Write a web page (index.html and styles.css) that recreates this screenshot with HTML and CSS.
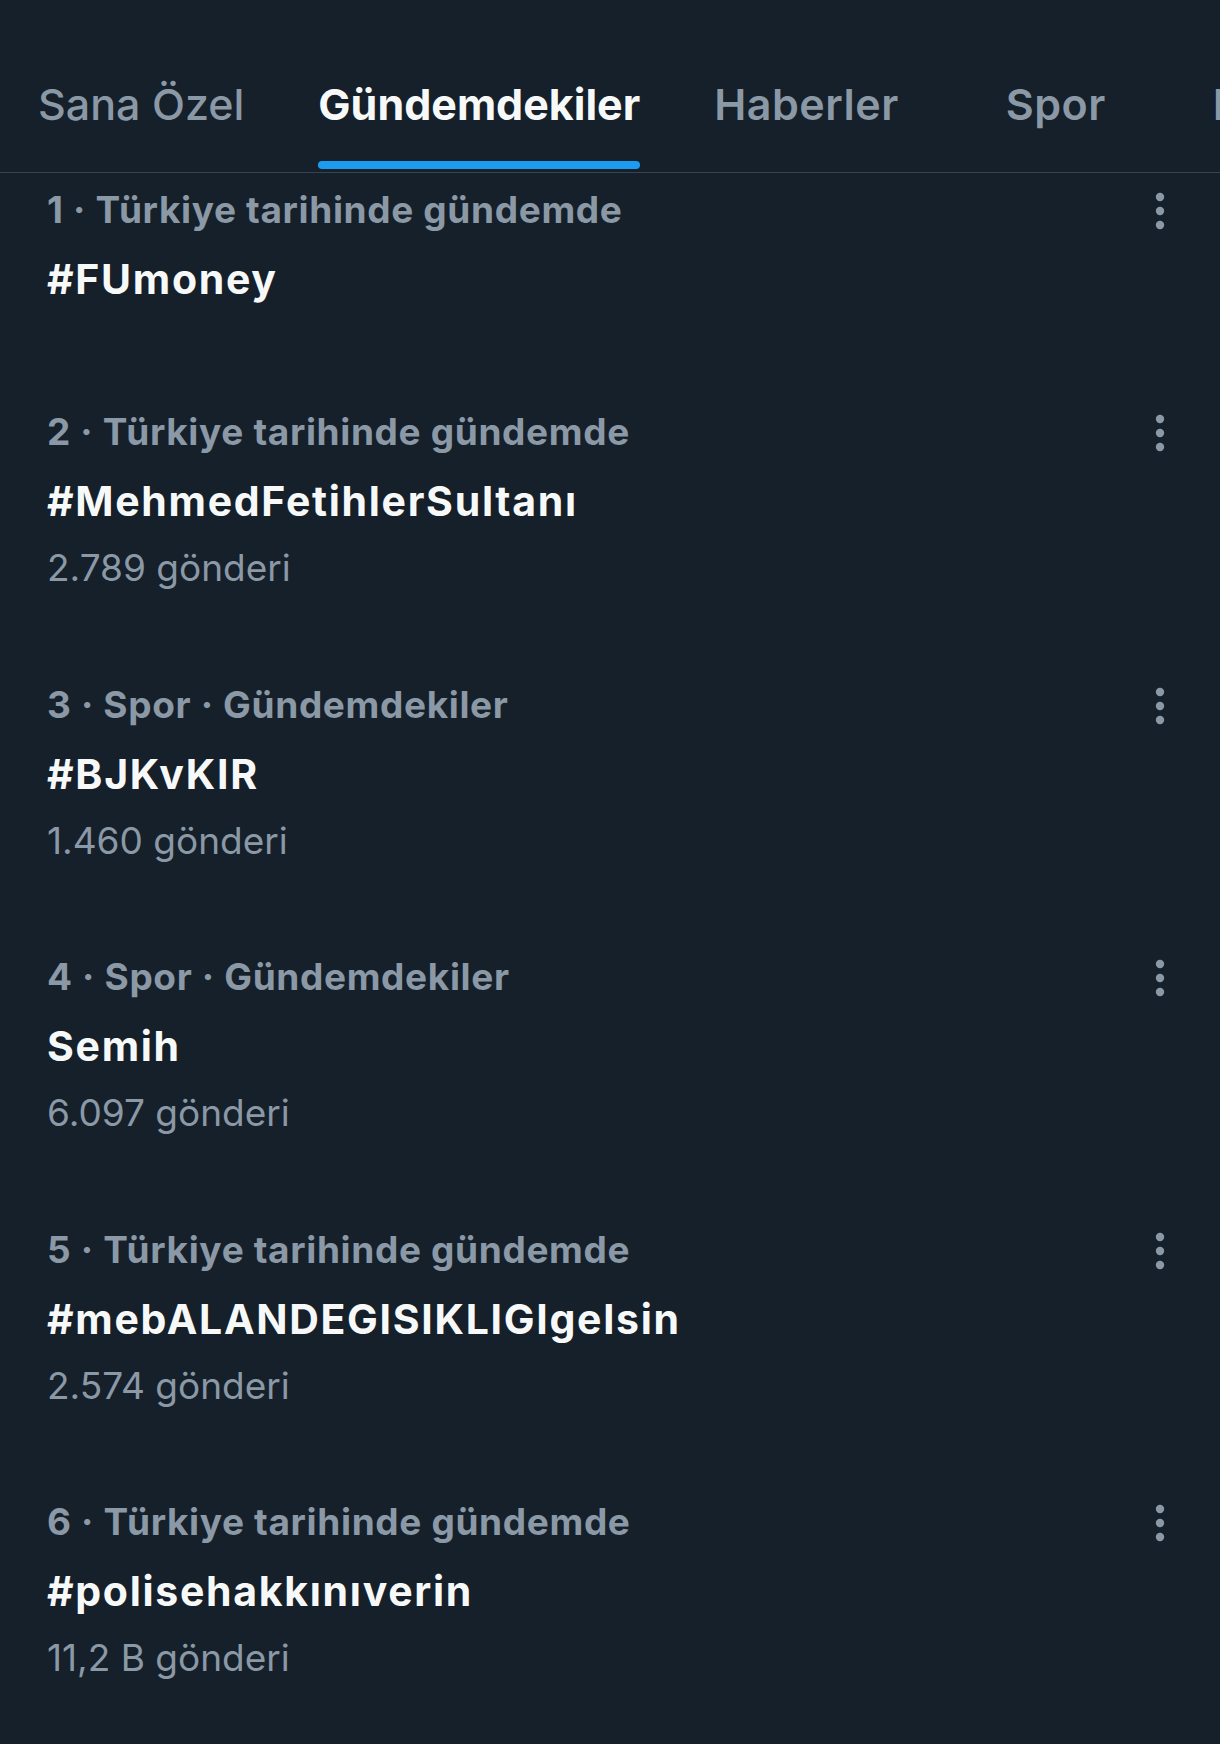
FILE: index.html
```html
<!DOCTYPE html>
<html lang="tr">
<head>
<meta charset="utf-8">
<title>Gündemdekiler</title>
<link rel="stylesheet" href="styles.css">
</head>
<body>
<div class="screen">
  <nav class="tabs">
    <div class="tab tab-light"><span class="tab-label">Sana Özel</span><span class="tab-bar"></span></div>
    <div class="tab tab-active"><span class="tab-label">Gündemdekiler</span><span class="tab-bar"></span></div>
    <div class="tab"><span class="tab-label">Haberler</span><span class="tab-bar"></span></div>
    <div class="tab tab-wide"><span class="tab-label">Spor</span><span class="tab-bar"></span></div>
    <div class="tab"><span class="tab-label">Eğlence</span><span class="tab-bar"></span></div>
  </nav>

  <ul class="trends">
    <li class="trend trend-first">
      <div class="trend-body">
        <div class="trend-meta">1 · Türkiye tarihinde gündemde</div>
        <div class="trend-title">#FUmoney</div>
      </div>
      <div class="trend-more"><svg viewBox="0 0 12 40" width="12" height="40"><circle cx="6" cy="6" r="4.2"/><circle cx="6" cy="20" r="4.2"/><circle cx="6" cy="34" r="4.2"/></svg></div>
    </li>
    <li class="trend">
      <div class="trend-body">
        <div class="trend-meta">2 · Türkiye tarihinde gündemde</div>
        <div class="trend-title">#MehmedFetihlerSultanı</div>
        <div class="trend-count">2.789 gönderi</div>
      </div>
      <div class="trend-more"><svg viewBox="0 0 12 40" width="12" height="40"><circle cx="6" cy="6" r="4.2"/><circle cx="6" cy="20" r="4.2"/><circle cx="6" cy="34" r="4.2"/></svg></div>
    </li>
    <li class="trend">
      <div class="trend-body">
        <div class="trend-meta">3 · Spor · Gündemdekiler</div>
        <div class="trend-title">#BJKvKIR</div>
        <div class="trend-count">1.460 gönderi</div>
      </div>
      <div class="trend-more"><svg viewBox="0 0 12 40" width="12" height="40"><circle cx="6" cy="6" r="4.2"/><circle cx="6" cy="20" r="4.2"/><circle cx="6" cy="34" r="4.2"/></svg></div>
    </li>
    <li class="trend">
      <div class="trend-body">
        <div class="trend-meta">4 · Spor · Gündemdekiler</div>
        <div class="trend-title">Semih</div>
        <div class="trend-count">6.097 gönderi</div>
      </div>
      <div class="trend-more"><svg viewBox="0 0 12 40" width="12" height="40"><circle cx="6" cy="6" r="4.2"/><circle cx="6" cy="20" r="4.2"/><circle cx="6" cy="34" r="4.2"/></svg></div>
    </li>
    <li class="trend">
      <div class="trend-body">
        <div class="trend-meta">5 · Türkiye tarihinde gündemde</div>
        <div class="trend-title">#mebALANDEGISIKLIGIgelsin</div>
        <div class="trend-count">2.574 gönderi</div>
      </div>
      <div class="trend-more"><svg viewBox="0 0 12 40" width="12" height="40"><circle cx="6" cy="6" r="4.2"/><circle cx="6" cy="20" r="4.2"/><circle cx="6" cy="34" r="4.2"/></svg></div>
    </li>
    <li class="trend">
      <div class="trend-body">
        <div class="trend-meta">6 · Türkiye tarihinde gündemde</div>
        <div class="trend-title">#polisehakkınıverin</div>
        <div class="trend-count">11,2 B gönderi</div>
      </div>
      <div class="trend-more"><svg viewBox="0 0 12 40" width="12" height="40"><circle cx="6" cy="6" r="4.2"/><circle cx="6" cy="20" r="4.2"/><circle cx="6" cy="34" r="4.2"/></svg></div>
    </li>
  </ul>
</div>
</body>
</html>
```

FILE: styles.css
```css
* { box-sizing: border-box; }

html, body {
  margin: 0;
  padding: 0;
  background: #15202b;
}

body {
  width: 1220px;
  height: 1744px;
  overflow: hidden;
  font-family: Inter, "Noto Sans", "DejaVu Sans", sans-serif;
  color: #f7f9f9;
}

.screen {
  width: 1220px;
  height: 1744px;
  overflow: hidden;
}

/* ---------- tabs ---------- */
.tabs {
  display: flex;
  height: 173px;
  padding-left: 1px;
  border-bottom: 1px solid #38444d;
  overflow: hidden;
  white-space: nowrap;
}

.tab {
  flex: none;
  display: flex;
  flex-direction: column;
  padding: 74px 37px 0;
  height: 172px;
  color: #8b98a5;
  font-size: 43px;
  font-weight: 600;
  letter-spacing: 0.5px;
}

.tab-light {
  font-weight: 500;
  letter-spacing: 0;
}

.tab-label {
  line-height: 60px;
  text-align: center;
}

.tab-wide .tab-label { min-width: 166px; }

.tab-bar {
  margin-top: 27px;
  height: 8px;
  border-radius: 4px;
  background: transparent;
}

.tab-active {
  color: #f7f9f9;
  font-weight: 700;
  letter-spacing: 0;
}

.tab-active .tab-bar { background: #1d9bf0; }

/* ---------- trends ---------- */
.trends {
  list-style: none;
  margin: 0;
  padding: 0;
}

.trend {
  display: flex;
  align-items: flex-start;
  padding: 34px 40px 34.5px 47px;
}

.trend-first {
  padding-top: 2px;
  padding-bottom: 50px;
}

.trend-body {
  flex: 1;
  min-width: 0;
  white-space: nowrap;
}

.trend-meta {
  font-size: 37px;
  font-weight: 700;
  letter-spacing: 0.65px;
  line-height: 70px;
  color: #8b98a5;
}

.trend-title {
  font-size: 41px;
  font-weight: 700;
  letter-spacing: 1.7px;
  line-height: 68px;
  color: #f7f9f9;
}

.trend-count {
  font-size: 37px;
  font-weight: 400;
  line-height: 66px;
  color: #8b98a5;
}

.trend-more {
  flex: none;
  width: 40px;
  height: 70px;
  display: flex;
  align-items: center;
  justify-content: center;
  margin-top: 1px;
}

.trend-more svg { fill: #8b98a5; display: block; }
```
